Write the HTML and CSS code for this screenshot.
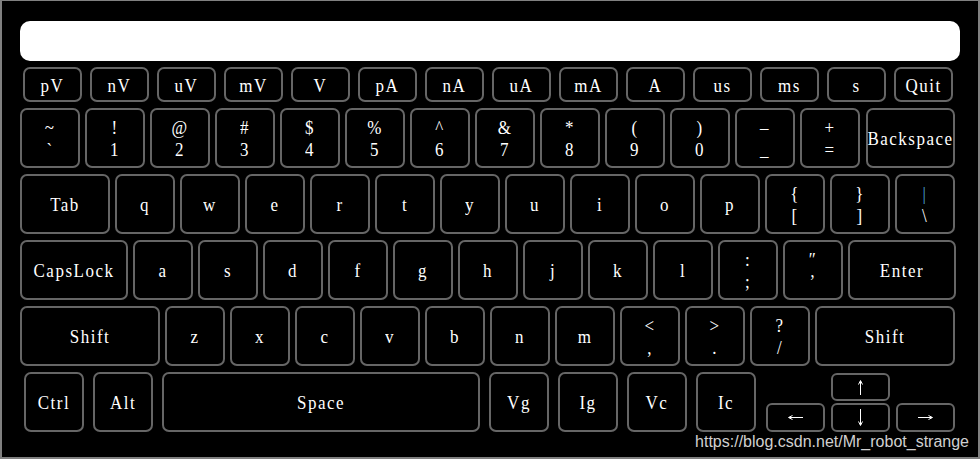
FILE: index.html
```html
<!DOCTYPE html>
<html lang="en">
<head>
    <meta charset="UTF-8">
    <meta name="viewport" content="width=device-width, initial-scale=1.0">
    <title>Keyboard</title>
    <link rel="stylesheet" href="styles.css">
</head>
<body>
    <div class="frame">
        <div class="display"></div>

        <!-- unit keys -->
        <div class="row units">
            <div class="key"><span>pV</span></div>
            <div class="key"><span>nV</span></div>
            <div class="key"><span>uV</span></div>
            <div class="key"><span>mV</span></div>
            <div class="key"><span>V</span></div>
            <div class="key"><span>pA</span></div>
            <div class="key"><span>nA</span></div>
            <div class="key"><span>uA</span></div>
            <div class="key"><span>mA</span></div>
            <div class="key"><span>A</span></div>
            <div class="key"><span>us</span></div>
            <div class="key"><span>ms</span></div>
            <div class="key"><span>s</span></div>
            <div class="key"><span>Quit</span></div>
        </div>

        <div class="row nums">
            <div class="key two"><span>~</span><span>`</span></div>
            <div class="key two"><span>!</span><span>1</span></div>
            <div class="key two"><span>@</span><span>2</span></div>
            <div class="key two"><span>#</span><span>3</span></div>
            <div class="key two"><span>$</span><span>4</span></div>
            <div class="key two"><span>%</span><span>5</span></div>
            <div class="key two"><span>^</span><span>6</span></div>
            <div class="key two"><span>&amp;</span><span>7</span></div>
            <div class="key two"><span>*</span><span>8</span></div>
            <div class="key two"><span>(</span><span>9</span></div>
            <div class="key two"><span>)</span><span>0</span></div>
            <div class="key two"><span>&ndash;</span><span>_</span></div>
            <div class="key two"><span>+</span><span>=</span></div>
            <div class="key backspace"><span>Backspace</span></div>
        </div>

        <div class="row">
            <div class="key tab"><span>Tab</span></div>
            <div class="key"><span>q</span></div>
            <div class="key"><span>w</span></div>
            <div class="key"><span>e</span></div>
            <div class="key"><span>r</span></div>
            <div class="key"><span>t</span></div>
            <div class="key"><span>y</span></div>
            <div class="key"><span>u</span></div>
            <div class="key"><span>i</span></div>
            <div class="key"><span>o</span></div>
            <div class="key"><span>p</span></div>
            <div class="key two"><span>{</span><span>[</span></div>
            <div class="key two"><span>}</span><span>]</span></div>
            <div class="key two"><span class="pipe">|</span><span>\</span></div>
        </div>

        <div class="row">
            <div class="key caps"><span>CapsLock</span></div>
            <div class="key"><span>a</span></div>
            <div class="key"><span>s</span></div>
            <div class="key"><span>d</span></div>
            <div class="key"><span>f</span></div>
            <div class="key"><span>g</span></div>
            <div class="key"><span>h</span></div>
            <div class="key"><span>j</span></div>
            <div class="key"><span>k</span></div>
            <div class="key"><span>l</span></div>
            <div class="key two"><span>:</span><span>;</span></div>
            <div class="key two"><span>&#8243;</span><span>&#8217;</span></div>
            <div class="key enter"><span>Enter</span></div>
        </div>

        <div class="row">
            <div class="key shift"><span>Shift</span></div>
            <div class="key"><span>z</span></div>
            <div class="key"><span>x</span></div>
            <div class="key"><span>c</span></div>
            <div class="key"><span>v</span></div>
            <div class="key"><span>b</span></div>
            <div class="key"><span>n</span></div>
            <div class="key"><span>m</span></div>
            <div class="key two"><span>&lt;</span><span>,</span></div>
            <div class="key two"><span>&gt;</span><span>.</span></div>
            <div class="key two"><span>?</span><span>/</span></div>
            <div class="key shift"><span>Shift</span></div>
        </div>

        <div class="row bottom">
            <div class="key"><span>Ctrl</span></div>
            <div class="key"><span>Alt</span></div>
            <div class="key space"><span>Space</span></div>
            <div class="key"><span>Vg</span></div>
            <div class="key"><span>Ig</span></div>
            <div class="key"><span>Vc</span></div>
            <div class="key"><span>Ic</span></div>
            <div class="arrows">
                <div class="key arrow up">
                    <svg width="7" height="17" viewBox="0 0 7 17"><path d="M3.5 2V16M1.5 5.5L3.5 1.5L5.5 5.5" stroke="#fff" fill="none" stroke-width="1"/></svg>
                </div>
                <div class="key arrow left">
                    <svg width="17" height="7" viewBox="0 0 17 7"><path d="M2 3.5H16M5.5 1.5L1.5 3.5L5.5 5.5" stroke="#fff" fill="none" stroke-width="1"/></svg>
                </div>
                <div class="key arrow down">
                    <svg width="7" height="19" viewBox="0 0 7 19"><path d="M3.5 1V17M1.5 13.5L3.5 17.5L5.5 13.5" stroke="#fff" fill="none" stroke-width="1"/></svg>
                </div>
                <div class="key arrow right">
                    <svg width="17" height="7" viewBox="0 0 17 7"><path d="M1 3.5H15M11.5 1.5L15.5 3.5L11.5 5.5" stroke="#fff" fill="none" stroke-width="1"/></svg>
                </div>
            </div>
        </div>

        <div class="watermark">https://blog.csdn.net/Mr_robot_strange</div>
    </div>
</body>
</html>
```

FILE: styles.css
```css
* {
    box-sizing: border-box;
}

body {
    margin: 0;
    background-color: #fff;
}

.frame {
    position: relative;
    width: 980px;
    height: 459px;
    background-color: #000;
    border-style: solid;
    border-color: #808080;
    border-width: 1px 2px 2px 2px;
    padding-top: 20px;
}

.display {
    margin-left: 18px;
    width: 940px;
    height: 40px;
    background-color: #fff;
    border-radius: 10px;
}

.row {
    display: flex;
    gap: 5px;
    margin-top: 6px;
    padding-left: 18px;
}

.key {
    display: flex;
    flex-direction: column;
    align-items: center;
    justify-content: center;
    flex: none;
    width: 60px;
    height: 60px;
    padding-top: 2px;
    border: 2px solid #666;
    border-radius: 7px;
    color: #fff;
    font-family: "Liberation Serif", "Times New Roman", serif;
    font-size: 17px;
    letter-spacing: 1.5px;
    white-space: nowrap;
}

.key span {
    display: block;
    line-height: 22px;
    transform: scaleY(1.15);
}

.units {
    gap: 8px;
    padding-left: 21px;
}

.units .key {
    width: 59px;
    height: 35px;
}

.backspace {
    width: 89px;
    margin-left: 1px;
}

.tab {
    width: 90px;
}

.caps,
.enter {
    width: 108px;
}

.shift {
    width: 140px;
}

.pipe {
    color: #4ba6dc;
}

.bottom {
    gap: 9px;
    padding-left: 22px;
}

.space {
    width: 318px;
}

.arrows {
    display: grid;
    grid-template-columns: 59px 59px 59px;
    grid-template-rows: 28px 29px;
    column-gap: 6px;
    row-gap: 2px;
    margin-left: 1px;
    margin-top: 1px;
}

.arrow {
    width: 59px;
    height: auto;
    padding-top: 0;
    border-radius: 6px;
}

.arrow.up {
    grid-column: 2;
    grid-row: 1;
}

.arrow.left {
    grid-column: 1;
    grid-row: 2;
}

.arrow.down {
    grid-column: 2;
    grid-row: 2;
}

.arrow.right {
    grid-column: 3;
    grid-row: 2;
}

.watermark {
    position: absolute;
    right: 9px;
    top: 432px;
    font-family: "Liberation Sans", Arial, sans-serif;
    font-size: 16px;
    color: #d0d0d0;
}
```
